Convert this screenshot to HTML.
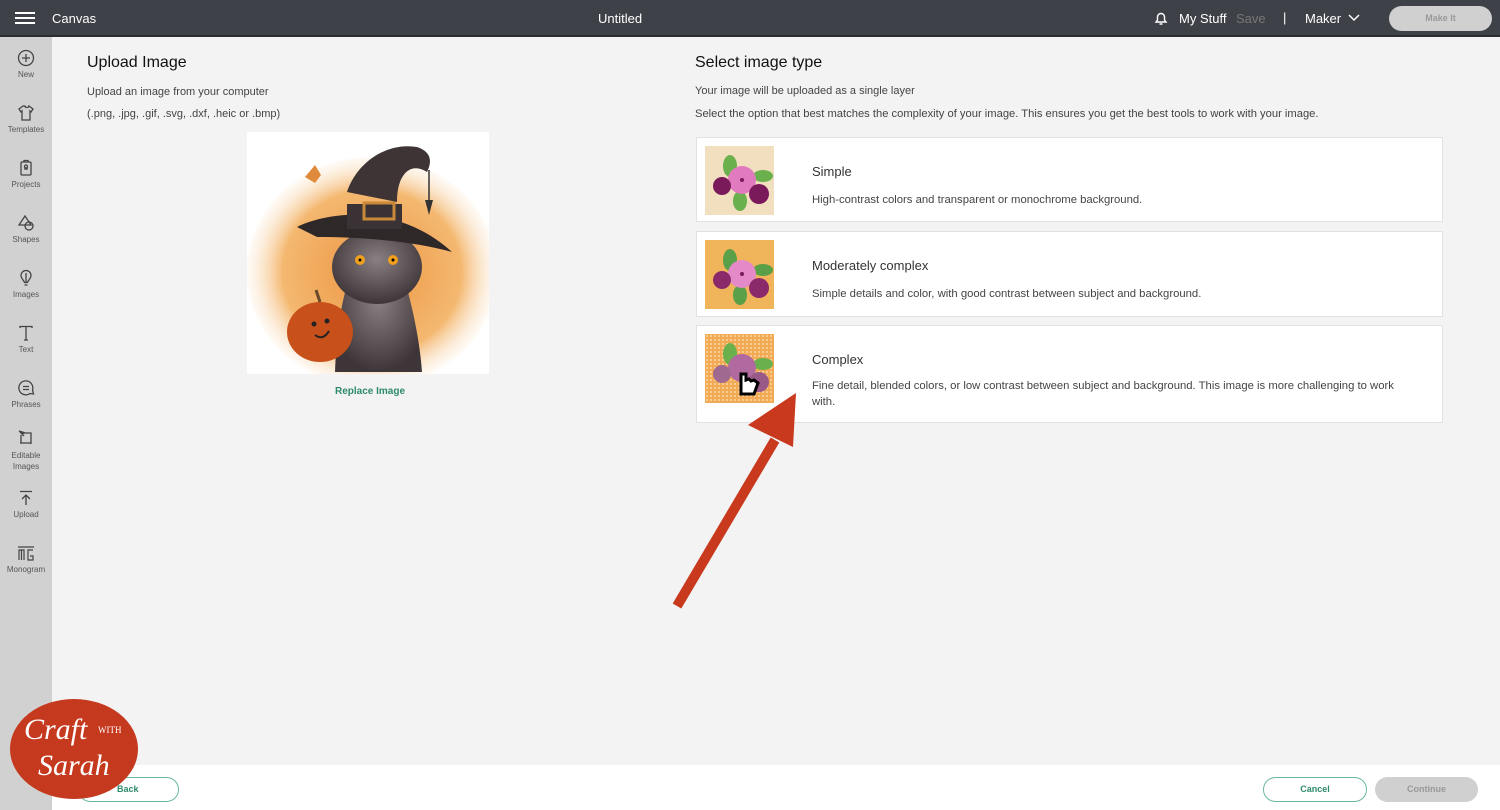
<!DOCTYPE html>
<html><head><meta charset="utf-8"><style>
*{margin:0;padding:0;box-sizing:border-box}
body{width:1500px;height:810px;overflow:hidden;background:#f3f3f3;font-family:"Liberation Sans",sans-serif;position:relative;color:#222}
.top{position:absolute;left:0;top:0;width:1500px;height:37px;background:#3e4147;border-bottom:2px solid #2a2c33;color:#fff}
.side{position:absolute;left:0;top:37px;width:52px;height:773px;background:#d1d1d1}
.si{position:absolute;left:0;width:52px;text-align:center;font-size:8px;color:#555}
.si svg{display:block;margin:0 auto 3px}
.foot{position:absolute;left:52px;top:765px;width:1448px;height:45px;background:#fff}
.abs{position:absolute}
.card{position:absolute;left:696px;width:747px;background:#fff;border:1px solid #e2e2e2}
.card .t{position:absolute;left:115px;font-size:13px;color:#333}
.card .d{position:absolute;left:115px;font-size:11.3px;color:#444;line-height:16px}
.thumb{position:absolute;left:8px;width:69px;height:69px}
</style></head><body>
<div class="top">
 <div class="abs" style="left:15px;top:12px;width:20px;height:2px;background:#fff;box-shadow:0 5px 0 #fff,0 10px 0 #fff"></div>
 <div class="abs" style="left:52px;top:11px;font-size:13px">Canvas</div>
 <div class="abs" style="left:598px;top:11px;font-size:13px">Untitled</div>
 <svg class="abs" style="left:1153px;top:10px" width="16" height="16" viewBox="0 0 16 16" fill="none" stroke="#fff" stroke-width="1.4"><path d="M3 12h10l-1.5-2V7a3.5 3.5 0 0 0-7 0v3z M6.5 14h3"/></svg>
 <div class="abs" style="left:1179px;top:11px;font-size:13px">My Stuff</div>
 <div class="abs" style="left:1236px;top:11px;font-size:13px;color:#777">Save</div>
 <div class="abs" style="left:1283px;top:10px;font-size:13px">|</div>
 <div class="abs" style="left:1305px;top:11px;font-size:13px">Maker</div>
 <svg class="abs" style="left:1348px;top:14px" width="12" height="8" viewBox="0 0 12 8" fill="none" stroke="#fff" stroke-width="1.5"><path d="M1 1l5 5 5-5"/></svg>
 <div class="abs" style="left:1389px;top:6px;width:103px;height:25px;border-radius:13px;background:#d0d0d0;color:#999;font-size:9px;font-weight:bold;text-align:center;line-height:25px">Make It</div>
</div>
<div class="side">
 <div class="si" style="top:12px"><svg width="18" height="18" viewBox="0 0 18 18" fill="none" stroke="#444" stroke-width="1.3"><circle cx="9" cy="9" r="7.5"/><path d="M9 5v8M5 9h8"/></svg>New</div>
 <div class="si" style="top:67px"><svg width="18" height="18" viewBox="0 0 18 18" fill="none" stroke="#444" stroke-width="1.3"><path d="M6 2L2 5l2 3 1-1v9h8V7l1 1 2-3-4-3c0 2-4 2-4 0z"/></svg>Templates</div>
 <div class="si" style="top:122px"><svg width="18" height="18" viewBox="0 0 18 18" fill="none" stroke="#444" stroke-width="1.3"><rect x="4" y="3" width="10" height="13" rx="1"/><path d="M7 3V1.5h4V3M7 10h4"/><circle cx="9" cy="7.5" r="1.5"/></svg>Projects</div>
 <div class="si" style="top:177px"><svg width="18" height="18" viewBox="0 0 18 18" fill="none" stroke="#444" stroke-width="1.3"><path d="M8 2l-6 9h12z"/><circle cx="12" cy="12" r="4"/></svg>Shapes</div>
 <div class="si" style="top:232px"><svg width="18" height="18" viewBox="0 0 18 18" fill="none" stroke="#444" stroke-width="1.3"><path d="M9 1.5a5 5 0 0 0-5 5c0 3 3 5 3.5 7h3c.5-2 3.5-4 3.5-7a5 5 0 0 0-5-5zM7.5 16h3M9 4v9"/></svg>Images</div>
 <div class="si" style="top:287px"><svg width="18" height="18" viewBox="0 0 18 18" fill="none" stroke="#444" stroke-width="1.3"><path d="M3 4V2.5h12V4M9 2.5V16M7 16h4"/></svg>Text</div>
 <div class="si" style="top:342px"><svg width="18" height="18" viewBox="0 0 18 18" fill="none" stroke="#444" stroke-width="1.3"><path d="M13 14.5A7 7 0 1 1 15.5 11l1 4z M6 7.5h6M6 10.5h6"/></svg>Phrases</div>
 <div class="si" style="top:392px;line-height:11px"><svg width="18" height="18" viewBox="0 0 18 18" fill="none" stroke="#444" stroke-width="1.3"><path d="M4 6v8h10V4H7M3 14h1M14 15v-1M3 3l4 4"/><path d="M2 2l5 1.5-1 1z" fill="#444"/></svg>Editable<br>Images</div>
 <div class="si" style="top:452px"><svg width="18" height="18" viewBox="0 0 18 18" fill="none" stroke="#444" stroke-width="1.3"><path d="M3 2.5h12M9 16V6M5 10l4-4 4 4"/></svg>Upload</div>
 <div class="si" style="top:507px"><svg width="18" height="18" viewBox="0 0 18 18" fill="none" stroke="#444" stroke-width="1.2"><path d="M1 3h16M2 16V6h5v10M4.5 6v10M16 6H11v10h5v-4h-3"/></svg>Monogram</div>
</div>
<div class="abs" style="left:87px;top:54px;font-size:16px;color:#111">Upload Image</div>
<div class="abs" style="left:87px;top:86px;font-size:11px;color:#444">Upload an image from your computer</div>
<div class="abs" style="left:87px;top:108px;font-size:11px;color:#444">(.png, .jpg, .gif, .svg, .dxf, .heic or .bmp)</div>
<svg class="abs" style="left:247px;top:132px" width="242" height="242" viewBox="0 0 242 242">
 <defs><radialGradient id="bg" cx="0.5" cy="0.5" r="0.55"><stop offset="0" stop-color="#ec9440"/><stop offset="0.65" stop-color="#f4b870"/><stop offset="1" stop-color="#fff" stop-opacity="0"/></radialGradient>
 <radialGradient id="fur" cx="0.5" cy="0.4" r="0.6"><stop offset="0" stop-color="#8a8084"/><stop offset="1" stop-color="#3e3538"/></radialGradient></defs>
 <rect width="242" height="242" fill="#fff"/>
 <ellipse cx="125" cy="140" rx="125" ry="115" fill="url(#bg)"/>
 <path d="M58 45l10-12 6 10-6 8z" fill="#e08a3c"/>
 <path d="M110 122 C100 150 90 180 88 240 H175 C172 200 162 160 150 122z" fill="url(#fur)"/>
 <ellipse cx="130" cy="135" rx="45" ry="37" fill="url(#fur)"/>
 <circle cx="113" cy="128" r="5" fill="#f0a020"/><circle cx="146" cy="128" r="5" fill="#f0a020"/>
 <circle cx="113" cy="128" r="1.5" fill="#000"/><circle cx="146" cy="128" r="1.5" fill="#000"/>
 <path d="M100 60 C110 30 140 10 170 15 C185 20 185 30 180 40 C165 30 150 40 150 70z" fill="#3e3436"/>
 <path d="M50 95 C80 80 150 70 205 120 C170 110 120 105 70 105z" fill="#2f2829"/>
 <rect x="100" y="72" width="55" height="25" fill="#3a3234"/>
 <rect x="117" y="71" width="30" height="16" fill="none" stroke="#c88a3a" stroke-width="3"/>
 <path d="M182 38v30" stroke="#333" stroke-width="1.5"/><path d="M178 68h8l-4 15z" fill="#333"/>
 <ellipse cx="73" cy="200" rx="33" ry="30" fill="#c8501a"/>
 <path d="M73 170l-4-12" stroke="#6a4a2a" stroke-width="3"/>
 <circle cx="67" cy="192" r="2.5" fill="#222"/><circle cx="80" cy="189" r="2.5" fill="#222"/>
 <path d="M68 203 q8 6 14-4" stroke="#222" stroke-width="2" fill="none"/>
</svg>
<div class="abs" style="left:335px;top:386px;font-size:10px;font-weight:bold;color:#2d8a6a">Replace Image</div>
<div class="abs" style="left:695px;top:54px;font-size:16px;color:#111">Select image type</div>
<div class="abs" style="left:695px;top:85px;font-size:11px;color:#444">Your image will be uploaded as a single layer</div>
<div class="abs" style="left:695px;top:108px;font-size:11.2px;color:#444">Select the option that best matches the complexity of your image. This ensures you get the best tools to work with your image.</div>

<div class="card" style="top:137px;height:85px">
 <svg class="thumb" style="top:8px" viewBox="0 0 69 69"><rect width="69" height="69" fill="#f2dfc0"/><g fill="#6ab04c"><ellipse cx="25" cy="20" rx="7" ry="11"/><ellipse cx="58" cy="30" rx="10" ry="6"/><ellipse cx="35" cy="55" rx="7" ry="10"/></g><circle cx="37" cy="34" r="14" fill="#e27ac0"/><circle cx="17" cy="40" r="9" fill="#7a1a5a"/><circle cx="54" cy="48" r="10" fill="#7a1a5a"/><circle cx="37" cy="34" r="2" fill="#7a1a5a"/></svg>
 <div class="t" style="top:26px">Simple</div><div class="d" style="top:54px">High-contrast colors and transparent or monochrome background.</div>
</div>
<div class="card" style="top:231px;height:86px">
 <svg class="thumb" style="top:8px" viewBox="0 0 69 69"><rect width="69" height="69" fill="#f0b45a"/><g fill="#5aa048"><ellipse cx="25" cy="20" rx="7" ry="11"/><ellipse cx="58" cy="30" rx="10" ry="6"/><ellipse cx="35" cy="55" rx="7" ry="10"/></g><circle cx="37" cy="34" r="14" fill="#e48ac8"/><circle cx="17" cy="40" r="9" fill="#8a2a6a"/><circle cx="54" cy="48" r="10" fill="#8a2a6a"/><circle cx="37" cy="34" r="2" fill="#7a1a5a"/></svg>
 <div class="t" style="top:26px">Moderately complex</div><div class="d" style="top:54px">Simple details and color, with good contrast between subject and background.</div>
</div>
<div class="card" style="top:325px;height:98px">
 <svg class="thumb" style="top:8px" viewBox="0 0 69 69"><defs><pattern id="dt" width="4" height="4" patternUnits="userSpaceOnUse"><rect width="4" height="4" fill="#f3aa55"/><circle cx="2" cy="2" r="1" fill="#fbd9a8"/></pattern></defs><rect width="69" height="69" fill="url(#dt)"/><g fill="#6ab04c"><ellipse cx="25" cy="20" rx="7" ry="11"/><ellipse cx="58" cy="30" rx="10" ry="6"/></g><circle cx="37" cy="34" r="14" fill="#b06aa0"/><circle cx="17" cy="40" r="9" fill="#a06a90"/><circle cx="54" cy="48" r="10" fill="#9a5a88"/><path d="M36 40v20h13l4-11-4-3-3 1-2-2-3 1v-6z" fill="#fff" stroke="#000" stroke-width="3"/></svg>
 <div class="t" style="top:26px">Complex</div><div class="d" style="top:52px">Fine detail, blended colors, or low contrast between subject and background. This image is more challenging to work<br>with.</div>
</div>

<svg class="abs" style="left:0;top:0" width="1500" height="810"><path d="M677 606 L775 440" stroke="#c8391e" stroke-width="10"/><path d="M796 393 L748 425 L793 447z" fill="#c8391e"/></svg>

<div class="foot"></div>
<div class="abs" style="left:78px;top:777px;width:101px;height:25px;border:1.5px solid #6ab89b;border-radius:13px;background:#fff;color:#2d8a6a;font-size:9px;font-weight:bold;line-height:22px;padding-left:38px">Back</div>
<div class="abs" style="left:1263px;top:777px;width:104px;height:25px;border:1.5px solid #6ab89b;border-radius:13px;color:#2d8a6a;font-size:9px;font-weight:bold;text-align:center;line-height:22px">Cancel</div>
<div class="abs" style="left:1375px;top:777px;width:103px;height:25px;border-radius:13px;background:#d0d0d0;color:#999;font-size:9px;font-weight:bold;text-align:center;line-height:25px">Continue</div>
<div class="abs" style="left:10px;top:699px;width:128px;height:100px;border-radius:50%;background:#c5391f;color:#fff;font-family:'Liberation Serif',serif;font-style:italic;text-align:center">
 <div style="position:absolute;left:14px;top:14px;font-size:30px">Craft</div>
 <div style="position:absolute;left:88px;top:26px;font-size:9px;font-style:normal">WITH</div>
 <div style="position:absolute;left:28px;top:50px;font-size:30px">Sarah</div>
</div>
</body></html>
